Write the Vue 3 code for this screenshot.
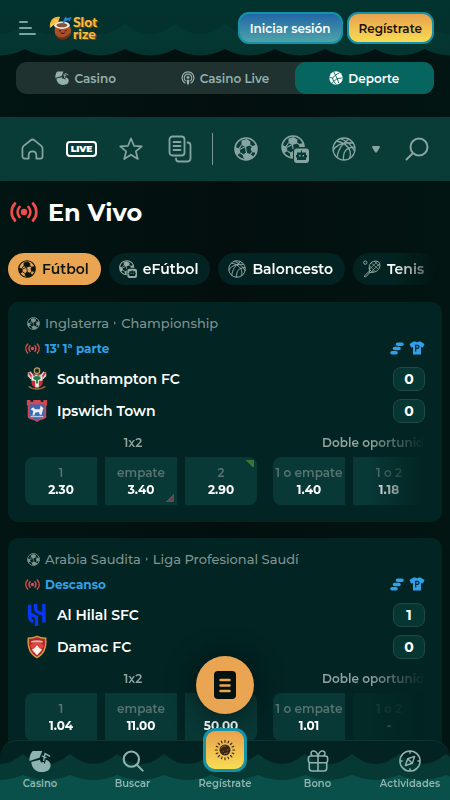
<script setup>
import { ref } from 'vue';

const activeTab = ref('Deporte');
const activeSport = ref('Fútbol');

const tabs = [
  { name: 'Casino', icon: 'coconut' },
  { name: 'Casino Live', icon: 'podcast' },
  { name: 'Deporte', icon: 'ball-solid' },
];

const sections = [
  { label: 'Inicio', icon: 'home' },
  { label: 'En vivo', icon: 'live-badge', active: true },
  { label: 'Favoritos', icon: 'star' },
  { label: 'Mis apuestas', icon: 'bets' },
];

const sportLinks = [
  { label: 'Fútbol', icon: 'football' },
  { label: 'eFútbol', icon: 'efootball' },
  { label: 'Baloncesto', icon: 'basketball' },
];

const sports = [
  { name: 'Fútbol', icon: 'football' },
  { name: 'eFútbol', icon: 'efootball' },
  { name: 'Baloncesto', icon: 'basketball' },
  { name: 'Tenis', icon: 'tennis' },
];

const matches = [
  {
    id: 1,
    country: 'Inglaterra',
    league: 'Championship',
    status: "13' 1ª parte",
    teams: [
      { name: 'Southampton FC', crest: 'southampton', score: 0 },
      { name: 'Ipswich Town', crest: 'ipswich', score: 0 },
    ],
    markets: [
      {
        name: '1x2',
        odds: [
          { label: '1', value: '2.30' },
          { label: 'empate', value: '3.40', trend: 'down' },
          { label: '2', value: '2.90', trend: 'up' },
        ],
      },
      {
        name: 'Doble oportunidad',
        odds: [
          { label: '1 o empate', value: '1.40' },
          { label: '1 o 2', value: '1.18' },
        ],
      },
    ],
  },
  {
    id: 2,
    country: 'Arabia Saudita',
    league: 'Liga Profesional Saudí',
    status: 'Descanso',
    teams: [
      { name: 'Al Hilal SFC', crest: 'hilal', score: 1 },
      { name: 'Damac FC', crest: 'damac', score: 0 },
    ],
    markets: [
      {
        name: '1x2',
        odds: [
          { label: '1', value: '1.04' },
          { label: 'empate', value: '11.00' },
          { label: '2', value: '50.00' },
        ],
      },
      {
        name: 'Doble oportunidad',
        odds: [
          { label: '1 o empate', value: '1.01' },
          { label: '1 o 2', value: '-', disabled: true },
        ],
      },
    ],
  },
];

const navItems = [
  { name: 'Casino', icon: 'coconut' },
  { name: 'Buscar', icon: 'search' },
  { name: 'Regístrate', icon: 'sun', special: true },
  { name: 'Bono', icon: 'gift' },
  { name: 'Actividades', icon: 'compass' },
];
</script>

<template>
  <svg class="sprite" aria-hidden="true">
    <symbol id="coconut" viewBox="0 0 24 24">
      <path fill="currentColor" d="M4 1h10.500l-3 7.500-11 3.500C0 8 1.500 3.500 4 1z" />
      <path fill="currentColor" d="M2.500 13l9.500-2.500 1 3 3-.500 1 2.500 1.500-5c3 1 4.800 2.800 5 5.500.500 5-3.500 8-9.500 8-6.500 0-11-4-11.500-11z" />
      <path fill="none" stroke="currentColor" stroke-width="1.500" d="M16 12l1.500-8 5.500 3M14 6.500l5 2" />
    </symbol>
    <symbol id="podcast" viewBox="0 0 24 24">
      <g fill="none" stroke="currentColor" stroke-width="2" stroke-linecap="round">
        <path d="M7 20.500a10.200 10.200 0 1 1 10 0" />
        <path d="M7.500 16.500a6.500 6.500 0 1 1 9 0" />
      </g>
      <circle cx="12" cy="11" r="2.500" fill="currentColor" />
      <path fill="currentColor" d="M9.500 15h5l-1 8h-3z" />
    </symbol>
    <symbol id="ball-solid" viewBox="0 0 24 24">
      <circle cx="12" cy="12" r="11.500" fill="currentColor" />
      <path fill="none" stroke="#06665f" stroke-width="1.600" d="M8 1l3 6 7-4M11 7l-5 5-5-1M6 12l2 6-3 3M8 18l5 5M11 7l3 6 8-1M14 13l-6 5M14 13l3 8" />
    </symbol>
    <symbol id="home" viewBox="0 0 24 24">
      <path fill="none" stroke="currentColor" stroke-width="1.800" stroke-linejoin="round" d="M1.500 11c0-1.200.400-2 1.300-2.800l7.400-5.900c1.100-.900 2.500-.900 3.600 0l7.400 5.900c.900.800 1.300 1.600 1.300 2.800v8c0 1.500-1 2.500-2.500 2.500H16v-3.500c0-5.500-8-5.500-8 0v3.500H4C2.500 21.500 1.500 20.500 1.500 19z" />
    </symbol>
    <symbol id="star" viewBox="0 0 24 24">
      <path fill="none" stroke="currentColor" stroke-width="1.700" stroke-linejoin="round" d="M12 1.500l3 7.300 7.800.500-6 5 2 7.700-6.800-4.200L5.200 22l2-7.700-6-5L9 8.800z" />
    </symbol>
    <symbol id="bets" viewBox="0 0 24 28">
      <g fill="none" stroke="currentColor" stroke-width="1.800" stroke-linecap="round">
        <rect x="1.500" y="1.500" width="15" height="19" rx="3" />
        <path d="M5.500 7h7M5.500 11h7M5.500 15h7M19.500 7.500c2 0 3 1 3 3V23c0 2-1 3.500-3 3.500h-9c-2 0-2.500-1-2.500-3" />
      </g>
    </symbol>
    <symbol id="football" viewBox="0 0 24 24">
      <circle cx="12" cy="12" r="11" fill="none" stroke="currentColor" stroke-width="1.600" />
      <g fill="currentColor">
        <path d="M7.500 3.500l5-1.500 4 2.500-.500 4-4.500 1.500L7.500 8z" />
        <path d="M1 10l4.500 1.500 1 4.500-3.500 2C1.500 16 1 12.500 1 10z" />
        <path d="M18.500 9l3.500-1c1.200 3 1 5.500 0 8l-4-1-1.500-3z" />
        <path d="M12 15.500l4 1.500 3.500 2.500c-2 2-4.500 3.500-7.500 3.500l-3-2.500.500-3z" />
      </g>
      <path fill="none" stroke="currentColor" stroke-width="1.200" d="M11.500 9.500l-6 3M11.500 10l1 6M7.500 8L5 11.500M16 8l3 2M6.500 16l3.500 2.500M18 15l-2 3" />
    </symbol>
    <symbol id="efootball" viewBox="0 0 28 28">
      <path fill="none" stroke="currentColor" stroke-width="1.600" d="M12 23A11 11 0 1 1 23 12" />
      <g fill="currentColor">
        <path d="M7.500 3.500l5-1.500 4 2.500-.500 4-4.500 1.500L7.500 8z" />
        <path d="M1 10l4.500 1.500 1 4.500-3.500 2C1.500 16 1 12.500 1 10zM18.500 9l3.500-1 1 4h-5zM9 18l3-2v7l-3-2z" />
        <path fill-rule="evenodd" d="M16 13.500h9a3 3 0 0 1 3 3V25a3 3 0 0 1-3 3h-9a3 3 0 0 1-3-3v-8.500a3 3 0 0 1 3-3zM20 15.500v2h-4v2.500h-1v2.500h1V25h9v-2.500h1V20h-1v-2.500h-4v-2z" />
        <path d="M18 20h1.500v1.500H18zM21.500 20H23v1.500h-1.500z" />
      </g>
      <path fill="none" stroke="currentColor" stroke-width="1.200" d="M11.500 9.500l-6 3M11.500 10l.500 4M7.500 8L5 11.500M16 8l3 2M6.500 16l3.500 2.500" />
    </symbol>
    <symbol id="basketball" viewBox="0 0 24 24">
      <g fill="none" stroke="currentColor" stroke-width="1.300">
        <circle cx="12" cy="12" r="11" />
        <path d="M4.500 4c7 1.500 12 5 13.500 10 .800 3 .500 5-.500 7.500M8.500 1.500c6 2.500 11 6.500 14 12.500M1 13.500c4-6.500 11-8.500 20.500-7.500M5 20.500c1-8 5-14 12-18.500M11.500 23c-.500-8 2-12.500 11.500-13" />
      </g>
    </symbol>
    <symbol id="tennis" viewBox="0 0 24 24">
      <g fill="none" stroke="currentColor" stroke-width="1.300">
        <circle cx="3" cy="3.500" r="2.200" />
        <path d="M9 13C6.500 8 10 2 16 1.500c4-.500 6.500 1.500 6.500 5.500 0 6-5.500 10.500-11 8.500l-2.500-2.500zM8.500 10v6.500H14M8.500 15l-7 6.500 1.500 1.500 7-7" />
        <path stroke-width="1" d="M9 8l7 7M11 4l9 8M15 1.500l7 7M9 12L19 2M12 15L22.500 4.500" />
      </g>
    </symbol>
    <symbol id="live" viewBox="0 0 28 20">
      <circle cx="14" cy="10" r="3.200" fill="currentColor" />
      <path fill="none" stroke="currentColor" stroke-width="2.700" stroke-linecap="round" d="M5 1.500c-4.500 5-4.500 12 0 17M23 1.500c4.500 5 4.500 12 0 17M9.500 5c-2.500 3-2.500 7 0 10M18.500 5c2.500 3 2.500 7 0 10" />
    </symbol>
    <symbol id="search" viewBox="0 0 24 24">
      <path fill="none" stroke="currentColor" stroke-width="2.300" stroke-linecap="round" d="M16.500 16.500l6 6M18.500 10a8.300 8.300 0 1 1-16.600 0 8.300 8.300 0 0 1 16.600 0z" />
    </symbol>
    <symbol id="search-left" viewBox="0 0 24 24">
      <path fill="none" stroke="currentColor" stroke-width="2" stroke-linecap="round" d="M8 16l-6.500 6.500M22.500 10a8.500 8.500 0 1 1-17 0 8.500 8.500 0 0 1 17 0z" />
    </symbol>
    <symbol id="gift" viewBox="0 0 24 24">
      <g fill="none" stroke="currentColor" stroke-width="1.700">
        <rect x="1.500" y="6.500" width="21" height="7.500" rx="2.500" />
        <path d="M2.500 14v6c0 2 1 3 3 3h13c2 0 3-1 3-3v-6M12 6.500V23M12 6.500c-1-4-3-5.500-5-5.500-3 0-3.500 4-1 5.500M12 6.500c1-4 3-5.500 5-5.500 3 0 3.500 4 1 5.500" />
      </g>
    </symbol>
    <symbol id="compass" viewBox="0 0 24 24">
      <g fill="none" stroke="currentColor" stroke-width="1.600" stroke-linejoin="round">
        <circle cx="12" cy="12" r="11" />
        <path d="M17 7l-2.500 7.500L7 17l2.500-7.500zM9.500 9.500l5 5M12 1v3M12 20v3M1 12h3M20 12h3" />
      </g>
    </symbol>
    <symbol id="sun" viewBox="0 0 24 24">
      <circle cx="12" cy="12" r="6" fill="#3b2716" />
      <path fill="none" stroke="#3b2716" stroke-width="1.300" stroke-linecap="round" d="M12 1.500v2M12 20.500v2M1.500 12h2M20.500 12h2M4.500 4.500L6 6M18 18l1.500 1.500M4.500 19.500L6 18M18 6l1.500-1.500M8 2.500l.700 1.700M15.300 19.800l.700 1.700M2.500 16l1.700-.700M19.800 8.700l1.700-.700M16 2.500l-.700 1.700M8.700 19.800L8 21.500M2.500 8l1.700.700M19.800 15.300l1.700.700" />
      <path fill="none" stroke="#b8823a" stroke-width=".800" d="M8 10c1-2 3-3 5-2M15 11v1.500M10 13v1M11 16c2 0 3-.500 4-1.500" />
    </symbol>
    <symbol id="stats" viewBox="0 0 14 13">
      <path fill="none" stroke="currentColor" stroke-width="3.600" stroke-linecap="round" d="M7.500 2.200H12M4.500 6.500H9M2 10.800h4" />
    </symbol>
    <symbol id="shirt" viewBox="0 0 16 14">
      <path fill="currentColor" d="M4.500.500h2c.700 1 2.300 1 3 0h2L15.500 3l-1.500 3.500-2-.500v7.500H4V6l-2 .500L.500 3z" />
      <path fill="none" stroke="#04262a" stroke-width="1.200" d="M6.700 10.500V4.300h1.800c2 0 2 3 0 3H6.700" />
    </symbol>
    <symbol id="southampton" viewBox="0 0 22 26">
      <circle cx="11" cy="4" r="3" fill="#252b20" stroke="#c0a562" stroke-width="1.300" />
      <path fill="#d9d2ce" d="M1 6l3-1 3 3h8l3-3 3 1v4l-3 3H4l-3-3z" />
      <path stroke="#d22c3d" stroke-width="1.800" d="M2 6l4 6M7 7l2 5M13 7l-1 5M20 6l-4 6" />
      <path fill="#d3283c" d="M5 10h12v7c0 3-3 5-6 6-3-1-6-3-6-6z" />
      <path fill="#e9ece4" d="M5 10h12v5H5zM9 15h4v7H9z" />
      <path fill="#16804b" d="M7 12c0-3 8-3 8 0 0 2-1 2-3 2v4h-2v-4c-2 0-3 0-3-2z" />
      <path fill="none" stroke="#8a6738" stroke-width="2" d="M2 21c5 4 13 4 18 0" />
    </symbol>
    <symbol id="ipswich" viewBox="0 0 22 26">
      <path fill="#cc4a56" d="M0 1h4v2h3V1h8v2h3V1h4v6h-1v13l-3 2-4 1-3 2-3-2-4-1-3-2V7H0z" />
      <path fill="#3b67b8" d="M3 6h16v13c-2 2-5 2-8 4-3-2-6-2-8-4z" />
      <path fill="#eceef4" d="M4 11l3-2 2 2h5l1-4 3 3-1 3-1 4h-2l-1-3-4 1-1 3H6l1-5z" />
      <path stroke="#b6c7e4" stroke-width="1.500" d="M4 19h14" />
    </symbol>
    <symbol id="hilal" viewBox="0 0 22 26">
      <g fill="none" stroke="#0838f5" stroke-width="3.600">
        <path d="M3 2v12c0 3 1 5 4 6M9.500 1v5.500c0 4 5 4.500 8.500 5.500M18.500 1v20M10.500 25V14M3 12c2 1 5 1 7.500 3.500" />
      </g>
    </symbol>
    <symbol id="damac" viewBox="0 0 22 26">
      <path fill="#b7242a" stroke="#cf9a45" stroke-width="1.500" d="M11 1.500c3 1.500 6 2 9.500 2 .800 9-1 16.500-9.500 21C2.500 20 .700 12.500 1.500 3.500c3.500 0 6.500-.500 9.500-2z" />
      <path fill="#ddb9a4" d="M5 6.500c4-1 8-1 12 0l.500 1.500h-13z" />
      <path fill="#e04540" d="M3.500 12c3-5 12-5 15 0l-3 4h-9z" />
      <path fill="#fff4ec" d="M5.500 16l3-2 2.500-3 2.500 3 3 2-5.500 6z" />
    </symbol>
  </svg>

  <div class="page">
    <header class="header">
      <svg class="header-waves" aria-hidden="true">
        <defs>
          <linearGradient id="header-fill" x1="0" y1="0" x2="0" y2="1">
            <stop offset="0" stop-color="#033c37" />
            <stop offset="1" stop-color="#053430" />
          </linearGradient>
          <pattern id="header-front" x="25" width="50" height="60" patternUnits="userSpaceOnUse">
            <path fill="url(#header-fill)" d="M0 0h50v49q-25 13-50 0z" />
          </pattern>
          <pattern id="header-back" x="25" width="50" height="60" patternUnits="userSpaceOnUse">
            <path fill="#022d2a" fill-opacity=".6" d="M0 0h50v24q-25 21-50 0z" />
          </pattern>
        </defs>
        <rect width="100%" height="60" fill="url(#header-front)" />
        <rect width="100%" height="60" fill="url(#header-back)" />
      </svg>
      <div class="top-bar">
        <button class="menu-btn" type="button" aria-label="Menú">
          <span></span>
          <span></span>
          <span></span>
        </button>
        <a class="logo" href="#">
          <svg viewBox="0 0 26 26" aria-hidden="true">
            <circle cx="15" cy="16" r="9" fill="#a9502b" />
            <path fill="#6e3018" d="M7 20c5 5 12 4 16-2-1 9-13 11-16 2z" />
            <ellipse cx="14" cy="10" rx="8.500" ry="4" fill="#f6ead8" />
            <ellipse cx="14" cy="10" rx="6" ry="2.300" fill="#86533a" />
            <path fill="#f6b62d" d="M1 13C0 5 5 0 12 1l-2 5z" />
            <path stroke="#fbe08a" d="M2 11l8-6M5 4l5 2" />
            <path fill="none" stroke="#2b7fd0" stroke-width="1.800" d="M15 9l3-7 5 3M17 5l7-3" />
            <path fill="none" stroke="#3c1a10" stroke-width="1.200" d="M11 16h2M17 16h2M13 18q2 2 4 0" />
          </svg>
          <span class="logo-text">
            <span>Slot</span>
            <span>rize</span>
          </span>
        </a>
        <button class="login-btn" type="button">Iniciar sesión</button>
        <button class="register-btn" type="button">Regístrate</button>
      </div>
      <nav class="tabs">
        <button
          v-for="tab in tabs"
          :key="tab.name"
          class="tab"
          :class="{ active: tab.name === activeTab }"
          type="button"
          @click="activeTab = tab.name"
        >
          <svg aria-hidden="true"><use :href="'#' + tab.icon" /></svg>
          {{ tab.name }}
        </button>
      </nav>
    </header>

    <nav class="toolbar">
      <a
        v-for="item in sections"
        :key="item.label"
        class="tool"
        :class="{ active: item.active }"
        href="#"
        :aria-label="item.label"
      >
        <span v-if="item.active" class="live-badge">LIVE</span>
        <svg v-else :class="item.icon" aria-hidden="true"><use :href="'#' + item.icon" /></svg>
      </a>
      <span class="divider"></span>
      <a v-for="item in sportLinks" :key="item.label" class="tool" href="#" :aria-label="item.label">
        <svg :class="item.icon" aria-hidden="true"><use :href="'#' + item.icon" /></svg>
      </a>
      <button class="more-btn" type="button" aria-label="Más deportes">
        <svg viewBox="0 0 8 7" aria-hidden="true"><path fill="currentColor" d="M1 0h6c1 0 1 1 .800 1.500L5 6C4.500 7 3.500 7 3 6L.200 1.500C0 1 0 0 1 0z" /></svg>
      </button>
      <button class="find-btn" type="button" aria-label="Buscar">
        <svg aria-hidden="true"><use href="#search-left" /></svg>
      </button>
    </nav>

    <main class="content">
      <h1 class="title">
        <svg aria-hidden="true"><use href="#live" /></svg>
        En Vivo
      </h1>

      <div class="sports">
        <button
          v-for="sport in sports"
          :key="sport.name"
          class="chip"
          :class="{ active: sport.name === activeSport }"
          type="button"
          @click="activeSport = sport.name"
        >
          <svg aria-hidden="true"><use :href="'#' + sport.icon" /></svg>
          {{ sport.name }}
        </button>
      </div>

      <article v-for="match in matches" :key="match.id" class="card">
        <div class="league">
          <svg aria-hidden="true"><use href="#football" /></svg>
          <span>{{ match.country }}</span>
          <i class="arrow"></i>
          <span>{{ match.league }}</span>
        </div>
        <div class="status">
          <svg class="status-live" aria-hidden="true"><use href="#live" /></svg>
          <span>{{ match.status }}</span>
          <svg class="stats" aria-hidden="true"><use href="#stats" /></svg>
          <svg class="shirt" aria-hidden="true"><use href="#shirt" /></svg>
        </div>
        <div v-for="team in match.teams" :key="team.name" class="team">
          <svg aria-hidden="true"><use :href="'#' + team.crest" /></svg>
          <span class="team-name">{{ team.name }}</span>
          <span class="score">{{ team.score }}</span>
        </div>
        <div class="markets">
          <div v-for="market in match.markets" :key="market.name" class="market">
            <div class="market-name">{{ market.name }}</div>
            <div class="odds">
              <button
                v-for="odd in market.odds"
                :key="odd.label"
                class="odd"
                :class="odd.trend"
                type="button"
                :disabled="odd.disabled"
              >
                <span class="odd-label">{{ odd.label }}</span>
                <span>{{ odd.value }}</span>
              </button>
            </div>
          </div>
        </div>
      </article>
    </main>

    <button class="coupon-btn" type="button" aria-label="Cupón">
      <svg viewBox="0 0 22 28" aria-hidden="true">
        <rect width="22" height="28" rx="4" fill="#04120f" />
        <path stroke="#eaa553" stroke-width="2.500" stroke-linecap="round" d="M6.500 9h9M6.500 14.500h9M6.500 20h9" />
      </svg>
    </button>

    <nav class="bottom-nav">
      <svg class="nav-waves" aria-hidden="true">
        <defs>
          <pattern id="nav-back" x="23" width="47" height="60" patternUnits="userSpaceOnUse">
            <path fill="#063934" d="M0 13q23.500 20 47 0v47H0z" />
          </pattern>
          <pattern id="nav-front" x="23" width="47" height="60" patternUnits="userSpaceOnUse">
            <path fill="#0a504a" d="M0 34q23.500 10 47 0v26H0z" />
          </pattern>
        </defs>
        <rect width="100%" height="60" fill="url(#nav-back)" />
        <rect width="100%" height="60" fill="url(#nav-front)" />
      </svg>
      <a v-for="item in navItems" :key="item.name" class="nav-item" :class="{ special: item.special }" href="#">
        <span class="nav-icon">
          <svg aria-hidden="true"><use :href="'#' + item.icon" /></svg>
        </span>
        {{ item.name }}
      </a>
    </nav>
  </div>
</template>

<style>
html {
  background: #021110;
  scrollbar-width: none;
}
</style>

<style scoped>
.sprite {
  position: absolute;
  width: 0;
  height: 0;
}

.page {
  min-height: 100vh;
  padding-bottom: 60px;
  box-sizing: border-box;
  background: linear-gradient(90deg, #021513, #020f0e 50%, #021513);
  color: white;
  font-family: Montserrat, Inter, sans-serif;
  font-size: 14px;
  font-weight: 600;
}

button {
  padding: 0;
  border: 0;
  background: none;
  color: inherit;
  font: inherit;
  cursor: pointer;
}

a {
  color: inherit;
  text-decoration: none;
}

.header {
  position: relative;
  height: 117px;
  padding: 12px 16px 0;
  box-sizing: border-box;
}

.header-waves {
  position: absolute;
  top: 0;
  left: 0;
  width: 100%;
  height: 60px;
}

.top-bar {
  position: relative;
  display: flex;
  align-items: center;
  height: 32px;
}

.menu-btn {
  display: flex;
  flex-direction: column;
  gap: 4px;
  width: 20px;
  margin: 0 10px 0 3px;
}

.menu-btn span {
  width: 17px;
  height: 2px;
  border-radius: 1px;
  background: #7ca5a1;
}

.menu-btn span:first-child {
  width: 9px;
}

.menu-btn span:nth-child(2) {
  width: 13px;
}

.logo {
  display: flex;
  align-items: center;
  height: 28px;
  margin-right: auto;
}

.logo svg {
  width: 24px;
  height: 26px;
}

.logo-text {
  display: grid;
  grid-auto-rows: 12px;
  color: #f7bd3c;
  font-family: Lato, sans-serif;
  font-size: 14px;
  font-weight: 900;
  line-height: 12px;
  text-shadow: 1px 1px 0 #7a4a1e;
}

.login-btn,
.register-btn {
  height: 32px;
  padding: 0 10px;
  border: 2px solid #1492a8;
  border-radius: 11px;
  font-size: 12px;
}

.login-btn {
  margin-right: 4px;
  background: linear-gradient(#2267a6, #4ea4a9);
}

.register-btn {
  background: linear-gradient(#e8a14e, #f8dc53);
  color: #1d1208;
}

.tabs {
  position: relative;
  display: grid;
  grid-template-columns: repeat(3, 1fr);
  height: 32px;
  margin-top: 18px;
  border-radius: 11px;
  background: #203230;
}

.tab {
  display: flex;
  align-items: center;
  justify-content: center;
  gap: 5px;
  border-radius: 11px;
  color: #93b0ac;
  font-size: 12px;
}

.tab svg {
  width: 14px;
  height: 14px;
}

.tab.active {
  background: #06665f;
  color: white;
}

.toolbar {
  display: flex;
  align-items: center;
  height: 64px;
  padding: 0 21px 0 8px;
  background: #093b37;
  color: #86a5a1;
}

.tool {
  display: flex;
  align-items: center;
  justify-content: center;
  width: 49px;
  height: 48px;
}

.tool svg {
  width: 24px;
  height: 24px;
}

.tool .home {
  width: 23px;
  height: 23px;
}

.tool .bets {
  height: 28px;
}

.tool .efootball {
  width: 28px;
  height: 28px;
}

.live-badge {
  padding: 0 3px;
  border: 2px solid white;
  border-radius: 4px;
  color: white;
  font-size: 9px;
  font-weight: 900;
  line-height: 12px;
}

.divider {
  width: 1px;
  height: 32px;
  margin: 0 8px;
  background: #789591;
}

.more-btn svg {
  display: block;
  width: 8px;
  height: 7px;
}

.more-btn {
  margin-left: 4px;
}

.find-btn {
  margin-left: auto;
}

.find-btn svg {
  display: block;
  width: 24px;
  height: 24px;
}

.content {
  padding: 0 8px;
}

.title {
  display: flex;
  align-items: center;
  gap: 10px;
  height: 30px;
  margin: 16px 0 26px;
  padding-left: 2px;
  font-size: 24px;
  font-weight: 700;
}

.title svg {
  width: 28px;
  height: 20px;
  color: #f14c4c;
}

.sports {
  display: flex;
  gap: 8px;
  margin-bottom: 17px;
  overflow: hidden;
  -webkit-mask-image: linear-gradient(90deg, #000 calc(100% - 48px), transparent);
  mask-image: linear-gradient(90deg, #000 calc(100% - 48px), transparent);
}

.chip {
  display: flex;
  flex-shrink: 0;
  align-items: center;
  gap: 6px;
  height: 32px;
  padding: 0 12px 0 10px;
  border-radius: 16px;
  background: #022321;
}

.chip svg {
  width: 18px;
  height: 18px;
  color: #94aaa7;
}

.chip.active,
.chip.active svg {
  background: #eaa553;
  color: #0c1510;
}

.card {
  margin-bottom: 16px;
  padding: 8px 17px 17px;
  border-radius: 10px;
  background: #022422;
}

.league,
.status,
.team {
  display: flex;
  align-items: center;
}

.league {
  gap: 5px;
  height: 26px;
  padding-left: 2px;
  color: #7f9391;
  font-size: 13px;
  font-weight: 500;
}

.league svg {
  width: 13px;
  height: 13px;
}

.arrow {
  border: 2px solid transparent;
  border-left-color: #627d79;
  border-right: 0;
}

.status {
  gap: 5px;
  height: 24px;
  margin-bottom: 3px;
  color: #31a0e8;
  font-size: 12px;
  font-weight: 700;
}

.status-live {
  width: 15px;
  height: 11px;
  color: #e34a4b;
}

.stats {
  width: 14px;
  height: 13px;
  margin-left: auto;
}

.shirt {
  width: 16px;
  height: 14px;
}

.team {
  height: 32px;
  gap: 8px;
}

.team svg {
  width: 24px;
  height: 24px;
}

.team-name {
  flex: 1;
}

.score {
  width: 32px;
  height: 24px;
  box-sizing: border-box;
  border: 1px solid #254743;
  border-radius: 8px;
  background: #063632;
  font-weight: 700;
  line-height: 22px;
  text-align: center;
}

.markets {
  display: flex;
  gap: 16px;
  overflow: hidden;
  -webkit-mask-image: linear-gradient(90deg, #000 calc(100% - 56px), transparent);
  mask-image: linear-gradient(90deg, #000 calc(100% - 56px), transparent);
}

.market {
  flex: 0 0 232px;
}

.market-name {
  height: 30px;
  padding-right: 16px;
  color: #91a3a1;
  font-size: 12px;
  line-height: 32px;
  text-align: center;
  white-space: nowrap;
}

.odds {
  display: flex;
  gap: 8px;
}

.odd {
  display: flex;
  flex: 0 0 72px;
  flex-direction: column;
  align-items: center;
  justify-content: center;
  height: 48px;
  background: #083936;
  font-size: 12px;
  font-weight: 700;
  line-height: 17px;
  white-space: nowrap;
}

.odd:first-child {
  border-radius: 8px 0 0 8px;
}

.odd:nth-child(3) {
  border-radius: 0 8px 8px 0;
}

.odd-label {
  color: #58736f;
  font-weight: 600;
}

.odd:disabled {
  opacity: 0.3;
}

.odd.down {
  background: linear-gradient(135deg, transparent 50%, #66474a 50%) right 3px bottom 3px / 8px 8px no-repeat #083936;
}

.odd.up {
  background: linear-gradient(45deg, transparent 50%, #397537 50%) right 3px top 3px / 8px 8px no-repeat #083936;
}

.coupon-btn {
  position: fixed;
  bottom: 86px;
  left: calc(50% - 29px);
  width: 58px;
  height: 58px;
  border-radius: 50%;
  background: #eaa553;
  box-shadow: 0 2px 24px 4px rgba(0, 12, 12, 0.5);
}

.coupon-btn svg {
  display: block;
  width: 22px;
  height: 28px;
  margin: auto;
}

.bottom-nav {
  position: fixed;
  right: 0;
  bottom: 0;
  left: 0;
  display: flex;
  justify-content: space-between;
  height: 60px;
  padding: 0 8px;
  border-top: 1px solid #0c3532;
  box-sizing: border-box;
  border-radius: 18px 18px 0 0;
  background: #022321;
}

.nav-waves {
  position: absolute;
  top: 0;
  left: 0;
  width: 100%;
  height: 100%;
}

.nav-item {
  position: relative;
  display: flex;
  flex-direction: column;
  align-items: center;
  justify-content: flex-end;
  width: 64px;
  padding-bottom: 10px;
  box-sizing: border-box;
  color: #8fb4af;
  font-size: 10px;
  line-height: 12px;
}

.nav-icon {
  margin-bottom: 6px;
}

.nav-icon svg {
  display: block;
  width: 22px;
  height: 22px;
}

.special .nav-icon {
  padding: 8px;
  border: 3px solid #1592a5;
  border-radius: 12px;
  background: linear-gradient(#e8a14e, #f8dc53);
}
</style>
